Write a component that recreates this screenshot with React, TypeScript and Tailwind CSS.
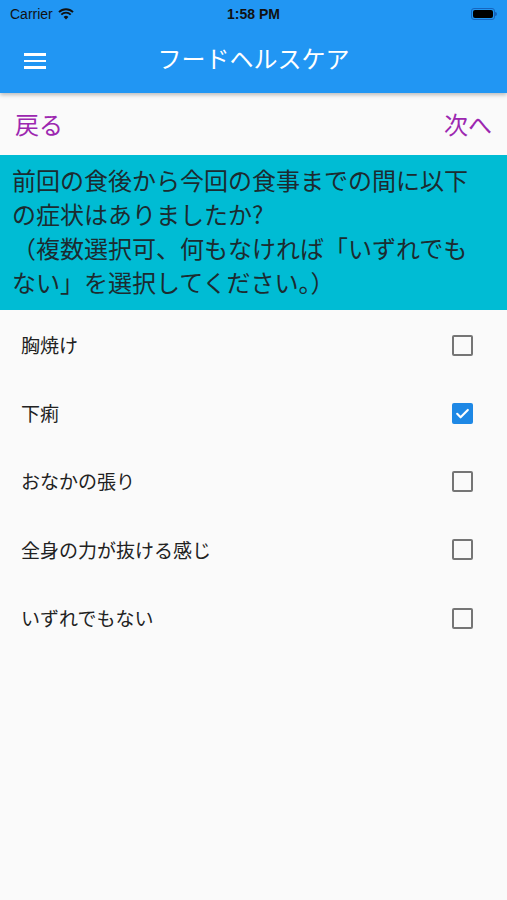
import React from "react";

const items = [
  { label: "胸焼け", checked: false },
  { label: "下痢", checked: true },
  { label: "おなかの張り", checked: false },
  { label: "全身の力が抜ける感じ", checked: false },
  { label: "いずれでもない", checked: false },
];

function Checkbox({ checked }: { checked: boolean }) {
  if (checked) {
    return (
      <div className="w-[21px] h-[21px] rounded-[2px] bg-[#1e88e5] flex items-center justify-center">
        <svg width="17" height="17" viewBox="0 0 24 24" fill="none">
          <path d="M4.5 12.5l4.8 4.8L19.5 7" stroke="white" strokeWidth="3" strokeLinecap="round" strokeLinejoin="round" />
        </svg>
      </div>
    );
  }
  return <div className="w-[21px] h-[21px] rounded-[2px] border-[2.5px] border-[#757575]" />;
}

export default function App() {
  return (
    <div
      className="w-[507px] h-[900px] bg-[#fafafa] flex flex-col overflow-hidden"
      style={{ fontFamily: '"Noto Sans CJK JP", "Noto Sans", sans-serif' }}
    >
      <div className="bg-[#2196f3] h-[93px] flex flex-col shadow-[0_2px_4px_rgba(0,0,0,0.25)] relative z-10">
        <div className="h-[28px] flex items-center justify-between px-[10px] text-[#111] text-[14px]" style={{ fontFamily: '"Liberation Sans", Inter, sans-serif' }}>
          <div className="flex items-center gap-[5px] w-[120px]">
            <span>Carrier</span>
            <svg width="16" height="12" viewBox="0 0 16 12">
              <path d="M8 11.5 L5.6 8.9 A3.4 3.4 0 0 1 10.4 8.9 Z" fill="#111" />
              <path d="M3.3 6.6 A6.6 6.6 0 0 1 12.7 6.6" stroke="#111" strokeWidth="1.9" fill="none" />
              <path d="M1 4.2 A9.9 9.9 0 0 1 15 4.2" stroke="#111" strokeWidth="1.9" fill="none" />
            </svg>
          </div>
          <span className="font-bold">1:58 PM</span>
          <div className="w-[120px] flex justify-end pr-[0px]">
            <div className="flex items-center">
              <div className="w-[24px] h-[12px] rounded-[3px] border border-[#1565c0] p-[1px]">
                <div className="w-full h-full bg-black rounded-[2px]" />
              </div>
              <div className="w-[2px] h-[4px] bg-[#1565c0] rounded-r-sm" />
            </div>
          </div>
        </div>
        <div className="flex-1 flex items-center relative">
          <div className="absolute left-[24px] top-[25px] flex flex-col gap-[4px]">
            <div className="w-[22px] h-[2.5px] bg-white" />
            <div className="w-[22px] h-[2.5px] bg-white" />
            <div className="w-[22px] h-[2.5px] bg-white" />
          </div>
          <div className="w-full text-center text-white text-[24px] leading-none -mt-[5px]">フードヘルスケア</div>
        </div>
      </div>
      <div className="h-[62px] flex items-center justify-between px-[15px] text-[#9c27b0] text-[24px]">
        <span>戻る</span>
        <span>次へ</span>
      </div>
      <div className="bg-[#00bcd4] pl-[12px] pr-[8px] pt-[8px] pb-[11px] text-[24px] leading-[34px] text-[#1c2b30] whitespace-nowrap">
        前回の食後から今回の食事までの間に以下<br />
        の症状はありましたか?<br />
        （複数選択可、何もなければ「いずれでも<br />
        ない」を選択してください。）
      </div>
      <div className="pt-[1px] flex flex-col">
        {items.map((it) => (
          <div key={it.label} className="h-[68.25px] flex items-center justify-between pl-[21px] pr-[34px]">
            <span className="text-[19px] text-[#222]">{it.label}</span>
            <Checkbox checked={it.checked} />
          </div>
        ))}
      </div>
    </div>
  );
}
